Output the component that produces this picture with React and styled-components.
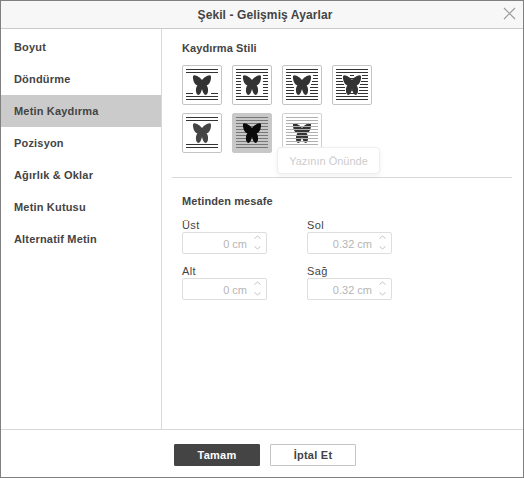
import React from "react";
import styled, { createGlobalStyle } from "styled-components";

const Global = createGlobalStyle`
  html, body { margin: 0; padding: 0; background: #fff; }
  body { font-family: "Liberation Sans", Arial, sans-serif; }
  * { box-sizing: border-box; }
`;

const Dialog = styled.div`
  width: 524px; height: 478px;
  border: 1px solid #808080;
  display: flex; flex-direction: column;
  background: #fff; color: #444;
  font-size: 11px; letter-spacing: 0.4px;
`;
const Header = styled.header`
  height: 28px; flex: none;
  background: #f7f7f7;
  border-bottom: 1px solid #cbcbcb;
  display: flex; align-items: center; justify-content: center;
  padding-left: 6px;
  position: relative;
  font-weight: 700; font-size: 12px; letter-spacing: 0.1px; color: #444;
`;
const Close = styled.svg`
  position: absolute; right: 7px; top: 6px;
  width: 13px; height: 13px;
`;
const Body = styled.div`
  flex: 1; display: flex; min-height: 0;
`;
const Sidebar = styled.nav`
  width: 161px; flex: none;
  border-right: 1px solid #d8d8d8;
  padding-top: 2px;
`;
const NavItem = styled.div`
  height: 32px; padding-left: 13px;
  display: flex; align-items: center;
  font-weight: 700; color: #444; letter-spacing: 0.18px;
  background: ${p => (p.$active ? "#cbcbcb" : "transparent")};
`;
const Content = styled.main`
  flex: 1; padding: 13px 11px 0 10px; position: relative;
`;
const Heading = styled.h3`
  margin: 0 0 0 10px; height: 13px; line-height: 13px;
  font-size: 11px; font-weight: 700; color: #444; letter-spacing: 0.1px;
`;
const TileGrid = styled.div`
  display: grid; grid-template-columns: repeat(4, 40px); gap: 8px 10px;
  margin: 10px 0 0 10px;
`;
const Tile = styled.div`
  width: 40px; height: 40px; border-radius: 2px;
  border: 1px solid ${p => (p.$selected ? "#c8c8c8" : p.$faded ? "#d0d0d0" : "#c4c4c4")};
  background: ${p => (p.$selected ? "#c8c8c8" : "#fff")};
  & > svg { display: block; margin: -1px; width: 40px; height: 40px; }
`;
const Tooltip = styled.div`
  position: absolute; left: 115px; top: 118px;
  width: 103px; height: 27px;
  border: 1px solid #eee; border-radius: 4px;
  background: #fff;
  box-shadow: 0 2px 5px rgba(0,0,0,0.06);
  display: flex; align-items: center; justify-content: center;
  font-size: 11px; color: #cdcdcd; letter-spacing: 0;
`;
const Divider = styled.div`
  height: 1px; background: #d8d8d8; margin-top: 24px;
`;
const SubHeading = styled(Heading)`
  margin-top: 17px;
`;
const Fields = styled.div`
  display: grid; grid-template-columns: 85px 85px; column-gap: 40px; row-gap: 11px;
  margin: 11px 0 0 10px;
`;
const Field = styled.div`
  display: flex; flex-direction: column;
`;
const FieldLabel = styled.label`
  height: 13px; line-height: 13px;
  font-size: 11px; color: #444;
`;
const InputBox = styled.div`
  width: 85px; height: 22px;
  border: 1px solid #dedede; border-radius: 2px;
  display: flex; align-items: center;
`;
const Value = styled.input`
  flex: 1; width: 0; height: 100%; border: 0; padding: 1px 1px 0 0; background: transparent;
  text-align: right; outline: none;
  font: inherit; letter-spacing: 0; color: #b5b5b5;
`;
const Spinner = styled.svg`
  width: 18px; height: 20px; flex: none;
`;
const Footer = styled.footer`
  height: 48px; flex: none;
  border-top: 1px solid #d8d8d8;
  display: flex; justify-content: center; gap: 10px;
  padding: 14px 0 0 6px;
`;
const Button = styled.button`
  width: 86px; height: 22px; padding: 0;
  font-family: inherit; font-size: 11px; font-weight: 700; letter-spacing: 0.25px;
  border-radius: 1px;
  border: 1px solid ${p => (p.$primary ? "#444" : "#c4c4c4")};
  background: ${p => (p.$primary ? "#444" : "#fff")};
  color: ${p => (p.$primary ? "#fff" : "#444")};
`;

const BF = "M20 15C18.6 12.8 15 10.4 12.4 10.2C11 10.1 10.8 11.5 11 13.2C11.4 16.6 12.6 19.4 15.4 20.6C14 22 13.6 25 14.2 27.6C14.8 30 16.4 30.6 17.4 29.6C18.8 28.2 19.5 26 20 24C20.5 26 21.2 28.2 22.6 29.6C23.6 30.6 25.2 30 25.8 27.6C26.4 25 26 22 24.6 20.6C27.4 19.4 28.6 16.6 29 13.2C29.2 11.5 29 10.1 27.6 10.2C25 10.4 21.4 12.8 20 15Z";

const Butterfly = ({ fill = "#333" }) => <path d={BF} fill={fill} />;

const Line = ({ y, x1 = 4, x2 = 36, c = "#333" }) => (
  <rect x={x1} y={y} width={x2 - x1} height={1} fill={c} />
);

const range = (a, b) => {
  const r = [];
  for (let y = a; y <= b; y += 3) r.push(y);
  return r;
};

const tiles = [
  () => (
    <>
      <Butterfly />
      {[4, 7, 31, 34].map(y => <Line key={y} y={y} />)}
      <Line y={28} x2={11} /><Line y={28} x1={29} />
    </>
  ),
  () => (
    <>
      <Butterfly />
      {[4, 7, 31, 34].map(y => <Line key={y} y={y} />)}
      {range(10, 28).map(y => (
        <React.Fragment key={y}><Line y={y} x2={9} /><Line y={y} x1={31} /></React.Fragment>
      ))}
    </>
  ),
  () => (
    <>
      <Butterfly />
      {[4, 7, 31, 34].map(y => <Line key={y} y={y} />)}
      {[[10,9,31],[13,9,31],[16,10,30],[19,11,29],[22,12,28],[25,12,28],[28,12,28]].map(([y, a, b]) => (
        <React.Fragment key={y}><Line y={y} x2={a} /><Line y={y} x1={b} /></React.Fragment>
      ))}
    </>
  ),
  () => (
    <>
      <Butterfly />
      {[4, 7, 31, 34].map(y => <Line key={y} y={y} />)}
      {[[10,10,30],[13,10,30],[16,11,29],[19,12,28],[22,13,27],[25,13,27],[28,14,26]].map(([y, a, b]) => (
        <React.Fragment key={y}><Line y={y} x2={a} /><Line y={y} x1={b} /></React.Fragment>
      ))}
      <Line y={10} x1={18} x2={22} /><Line y={13} x1={18} x2={22} />
      <Line y={28} x1={18} x2={22} /><Line y={25} x1={19} x2={21} />
    </>
  ),
  () => (
    <>
      <Butterfly fill="#444" />
      {[4, 7, 31, 34].map(y => <Line key={y} y={y} />)}
    </>
  ),
  () => (
    <>
      {range(4, 34).map(y => <Line key={y} y={y} c="#777" />)}
      <Butterfly fill="#0a0a0a" />
    </>
  ),
  () => (
    <>
      <Butterfly fill="#333" />
      {range(4, 34).map(y => <Line key={y} y={y} c="#b0b0b0" />)}
    </>
  ),
];

const nav = ["Boyut", "Döndürme", "Metin Kaydırma", "Pozisyon", "Ağırlık & Oklar", "Metin Kutusu", "Alternatif Metin"];
const fields = [["Üst", "0 cm"], ["Sol", "0.32 cm"], ["Alt", "0 cm"], ["Sağ", "0.32 cm"]];

export default function App() {
  return (
    <>
      <Global />
      <Dialog>
        <Header>
          Şekil - Gelişmiş Ayarlar
          <Close viewBox="0 0 13 13">
            <path d="M1 1L12 12M12 1L1 12" stroke="#999" strokeWidth="1.1" fill="none" />
          </Close>
        </Header>
        <Body>
          <Sidebar>
            {nav.map((n, i) => <NavItem key={n} $active={i === 2}>{n}</NavItem>)}
          </Sidebar>
          <Content>
            <Heading>Kaydırma Stili</Heading>
            <TileGrid>
              {tiles.map((Draw, i) => (
                <Tile key={i} $selected={i === 5} $faded={i === 6}>
                  <svg viewBox="0 0 40 40"><Draw /></svg>
                </Tile>
              ))}
            </TileGrid>
            <Tooltip>Yazının Önünde</Tooltip>
            <Divider />
            <SubHeading>Metinden mesafe</SubHeading>
            <Fields>
              {fields.map(([label, value]) => (
                <Field key={label}>
                  <FieldLabel>{label}</FieldLabel>
                  <InputBox>
                    <Value readOnly value={value} />
                    <Spinner viewBox="0 0 18 20">
                      <path d="M6.5 5.5L9.5 3L12.5 5.5M6.5 13.5L9.5 16L12.5 13.5" stroke="#c4c4c4" strokeWidth="1" fill="none" />
                    </Spinner>
                  </InputBox>
                </Field>
              ))}
            </Fields>
          </Content>
        </Body>
        <Footer>
          <Button $primary>Tamam</Button>
          <Button>İptal Et</Button>
        </Footer>
      </Dialog>
    </>
  );
}
